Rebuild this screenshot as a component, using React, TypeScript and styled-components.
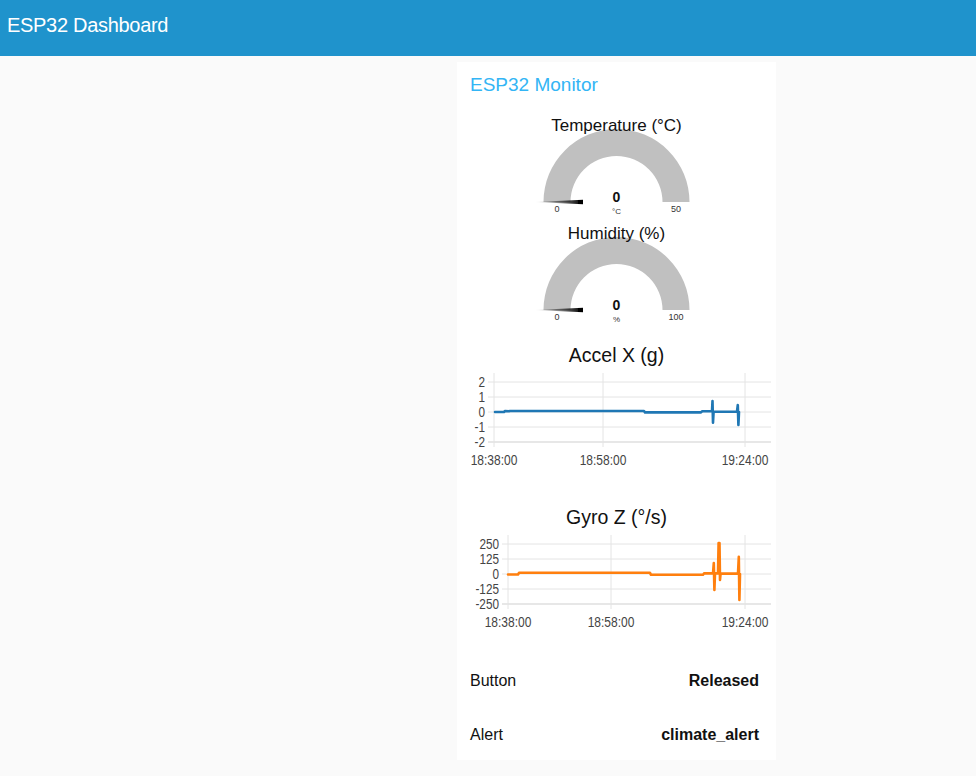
import React from "react";
import styled, { createGlobalStyle } from "styled-components";

const Global = createGlobalStyle`
  html, body { margin: 0; padding: 0; }
  body {
    background: #fafafa;
    font-family: "Liberation Sans", Arial, sans-serif;
    color: #111;
  }
`;

const Header = styled.header`
  height: 56px;
  box-sizing: border-box;
  background: #1f93cc;
  color: #fff;
  font-size: 20px;
  letter-spacing: -0.3px;
  line-height: 22px;
  padding: 14px 0 0 7px;
`;

const Main = styled.main`
  display: flex;
  padding: 6px 0 0 457px;
`;

const Card = styled.section`
  width: 319px;
  background: #fff;
  display: flex;
  flex-direction: column;
  padding-bottom: 1px;
`;

const GroupTitle = styled.div`
  height: 46px;
  line-height: 46px;
  padding-left: 13px;
  font-size: 19px;
  color: #33b5f5;
`;

const GaugeWidget = styled.div`
  height: 108px;
  display: flex;
  flex-direction: column;
  align-items: center;
`;

const WidgetTitle = styled.div<{ $size: number; $top: number; $lh: number }>`
  font-size: ${(p) => p.$size}px;
  line-height: ${(p) => p.$lh}px;
  margin-top: ${(p) => p.$top}px;
  color: #111;
  position: relative;
  z-index: 1;
`;

const Svg = styled.svg`
  display: block;
  overflow: visible;
`;

const ChartWidget = styled.div`
  height: 162px;
  display: flex;
  flex-direction: column;
  align-items: center;
`;

const Rows = styled.div`
  margin-top: 9px;
  display: flex;
  flex-direction: column;
  gap: 6px;
`;

const TextRow = styled.div`
  height: 48px;
  display: flex;
  align-items: center;
  justify-content: space-between;
  padding: 0 17px 0 13px;
  font-size: 16px;
`;

const Value = styled.span`
  font-weight: bold;
`;

const GaugeValue = styled.text`
  font-family: "Liberation Sans", Arial, sans-serif;
  font-weight: bold;
  font-size: 14px;
  fill: #111;
`;

const GaugeSmall = styled.text<{ $size: number }>`
  font-family: "Liberation Sans", Arial, sans-serif;
  font-size: ${(p) => p.$size}px;
  fill: #333;
`;

const AxisText = styled.text<{ $size: number }>`
  font-family: "Liberation Sans", Arial, sans-serif;
  font-size: ${(p) => p.$size}px;
  fill: #444;
`;

const NARROW = 0.8;
const labelWidth = (s: string, size: number) =>
  s.split("").reduce((w, c) => w + (c === ":" ? 0.278 : c === "-" ? 0.333 : 0.556), 0) *
  size *
  NARROW;

type GaugeProps = { title: string; unit: string; max: string; id: string };

const Gauge = ({ title, unit, max, id }: GaugeProps) => {
  const cx = 159.5;
  const by = 66;
  const R = 73;
  const r = 46;
  return (
    <GaugeWidget>
      <WidgetTitle $size={17} $top={8} $lh={20}>
        {title}
      </WidgetTitle>
      <Svg width={319} height={80} viewBox="0 0 319 80">
        <defs>
          <linearGradient id={id} x1="0" y1="0" x2="1" y2="0">
            <stop offset="0" stopColor="#000" stopOpacity="0" />
            <stop offset="1" stopColor="#000" stopOpacity="1" />
          </linearGradient>
        </defs>
        <path
          d={`M ${cx - R} ${by} A ${R} ${R} 0 0 1 ${cx + R} ${by} L ${cx + r} ${by} A ${r} ${r} 0 0 0 ${cx - r} ${by} Z`}
          fill="#c0c0c0"
        />
        <polygon points={`78,${by} 126,${by - 2.2} 126,${by + 2.2}`} fill={`url(#${id})`} />
        <rect x={121} y={by - 2} width={5} height={4} fill="#000" />
        <GaugeValue x={cx} y={by} textAnchor="middle">
          0
        </GaugeValue>
        <GaugeSmall $size={8} x={cx} y={by + 12} textAnchor="middle">
          {unit}
        </GaugeSmall>
        <GaugeSmall $size={9} x={100} y={by + 10} textAnchor="middle">
          0
        </GaugeSmall>
        <GaugeSmall $size={9} x={219} y={by + 10} textAnchor="middle">
          {max}
        </GaugeSmall>
      </Svg>
    </GaugeWidget>
  );
};

type ChartProps = {
  title: string;
  left: number;
  yLabels: string[];
  xs: number[];
  points: string;
  color: string;
};

const Chart = ({ title, left, yLabels, xs, points, color }: ChartProps) => {
  const gy = [15, 30, 45, 60, 75];
  const right = 314;
  const xl = ["18:38:00", "18:58:00", "19:24:00"];
  return (
    <ChartWidget>
      <WidgetTitle $size={19.5} $top={19} $lh={24}>
        {title}
      </WidgetTitle>
      <Svg width={319} height={119} viewBox="0 0 319 119">
        {gy.map((y, i) => (
          <line
            key={y}
            x1={left - 6}
            x2={right}
            y1={y}
            y2={y}
            stroke={i === 4 ? "#cfcfcf" : "#e4e4e4"}
            strokeWidth={1}
          />
        ))}
        {xs.map((x) => (
          <line key={x} x1={x} x2={x} y1={6} y2={80} stroke="#e4e4e4" strokeWidth={1} />
        ))}
        {yLabels.map((l, i) => (
          <AxisText
            key={l}
            $size={14}
            x={left - 9}
            y={gy[i] + 5}
            textAnchor="end"
            textLength={labelWidth(l, 14) * 1.05}
            lengthAdjust="spacingAndGlyphs"
          >
            {l}
          </AxisText>
        ))}
        {xs.map((x, i) => (
          <AxisText
            key={x}
            $size={15}
            x={x}
            y={98}
            textAnchor="middle"
            textLength={labelWidth(xl[i], 15)}
            lengthAdjust="spacingAndGlyphs"
          >
            {xl[i]}
          </AxisText>
        ))}
        <polyline
          points={points}
          fill="none"
          stroke={color}
          strokeWidth={2.6}
          strokeLinejoin="round"
          strokeLinecap="round"
        />
      </Svg>
    </ChartWidget>
  );
};

const accelPts =
  "38,45 47,45 48,44 52,44.3 53,44 187,44 188,45.4 244,45.4 245,44.3 255,44.3 255.5,34 256,55.7 256.6,44.6 268,44.8 280,44.6 280.8,38 281.4,58 282,45";

const gyroPts =
  "51,45.5 61,45.5 62,43.8 193,43.8 194,45.8 246,45.8 247,44.4 256,44.4 256.8,34 257.4,61 258,44.4 261,44.4 261.6,14 262.5,14 263,51 263.6,44.4 281,44.6 281.8,27.7 282.4,71 283,45";

export default function App() {
  return (
    <>
      <Global />
      <Header>ESP32 Dashboard</Header>
      <Main>
        <Card>
          <GroupTitle>ESP32 Monitor</GroupTitle>
          <Gauge title="Temperature (°C)" unit="°C" max="50" id="g1" />
          <Gauge title="Humidity (%)" unit="%" max="100" id="g2" />
          <Chart
            title="Accel X (g)"
            left={37}
            yLabels={["2", "1", "0", "-1", "-2"]}
            xs={[37, 146, 288]}
            points={accelPts}
            color="#1f77b4"
          />
          <Chart
            title="Gyro Z (°/s)"
            left={51}
            yLabels={["250", "125", "0", "-125", "-250"]}
            xs={[51, 154, 288]}
            points={gyroPts}
            color="#ff7f0e"
          />
          <Rows>
            <TextRow>
              <span>Button</span>
              <Value>Released</Value>
            </TextRow>
            <TextRow>
              <span>Alert</span>
              <Value>climate_alert</Value>
            </TextRow>
          </Rows>
        </Card>
      </Main>
    </>
  );
}
